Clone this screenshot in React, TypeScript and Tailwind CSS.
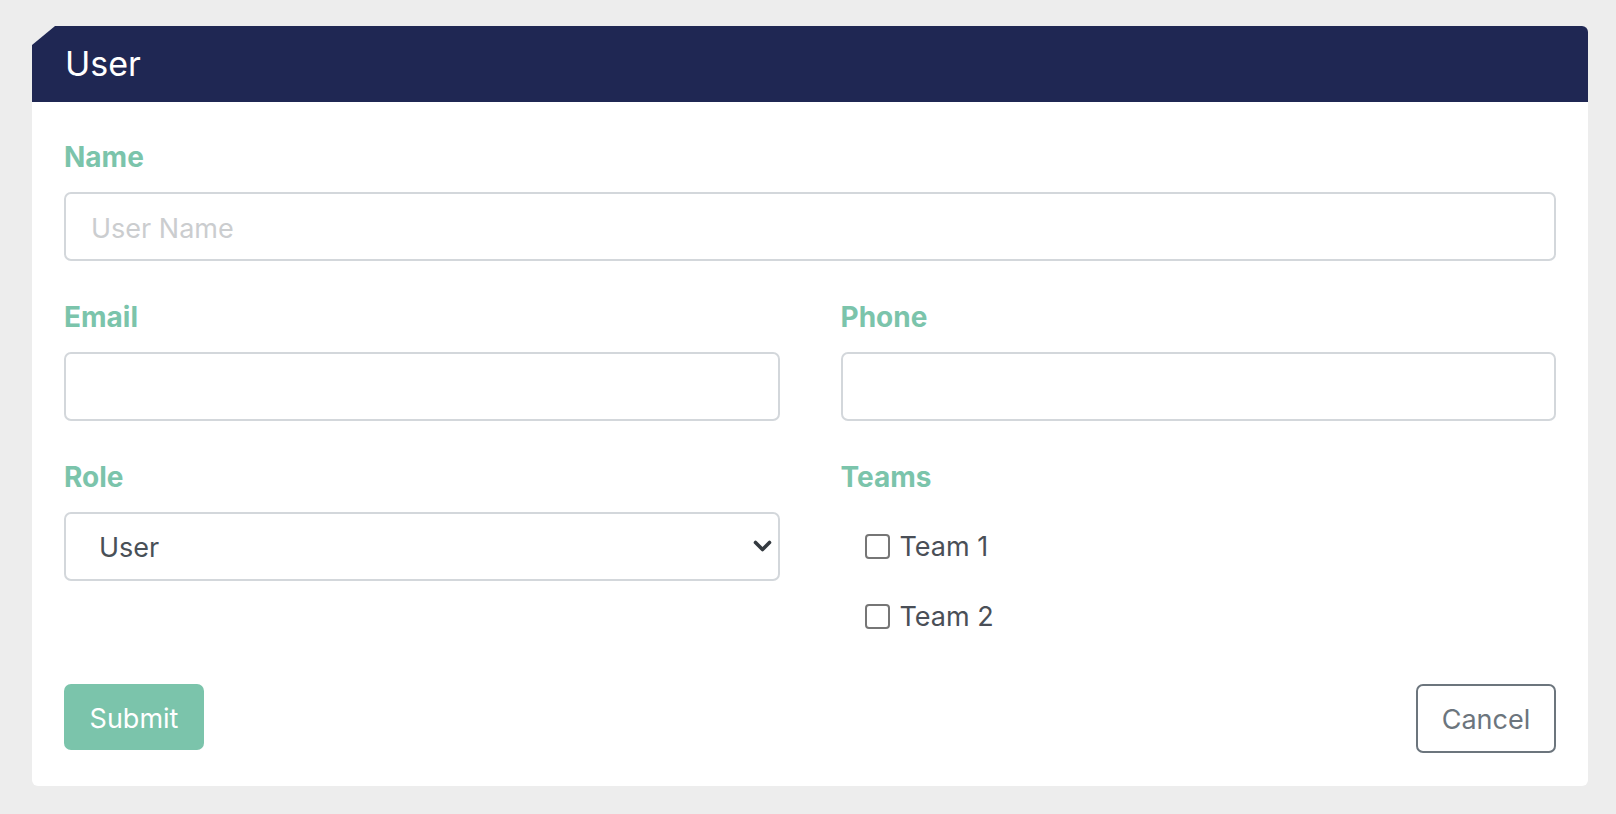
import React from "react";

const font = { fontFamily: "Inter, 'Noto Sans', 'Liberation Sans', sans-serif" };

function Label({ children }: { children: React.ReactNode }) {
  return (
    <label className="block text-[28px] font-bold pt-[3px] leading-[37px] text-[#7bc4ab] mb-4">
      {children}
    </label>
  );
}

function TextInput({ placeholder }: { placeholder?: string }) {
  return (
    <input
      type="text"
      placeholder={placeholder}
      className="block w-full h-[69px] rounded-[7px] border-2 border-[#d3d7db] bg-white px-[25px] pt-[4px] text-[27px] text-[#495057] placeholder:text-[#cbcdcf] outline-none"
    />
  );
}

function Check({ label }: { label: string }) {
  return (
    <label className="flex h-[70px] items-center pl-[24px] pt-[6px]">
      <input
        type="checkbox"
        className="appearance-none w-[25px] h-[25px] rounded-[4px] border-2 border-[#767676] bg-white m-0"
      />
      <span className="ml-[10px] text-[27px] text-[#4a4f57] leading-none">{label}</span>
    </label>
  );
}

export default function App() {
  return (
    <div className="min-h-screen w-full bg-[#ededed] pt-[26px] pl-[32px] pr-[28px] pb-[28px]" style={font}>
      <div className="w-[1556px] bg-white rounded-md [clip-path:polygon(23px_0,100%_0,100%_100%,0_100%,0_19px)]">
        <div className="h-[76px] bg-[#1f2753] rounded-tr-md flex items-center px-[33px]">
          <h1 className="text-[34px] leading-none text-white font-normal">User</h1>
        </div>
        <div className="px-8 pt-[34px] pb-[33px] flex flex-col gap-[35px]">
          <div>
            <Label>Name</Label>
            <TextInput placeholder="User Name" />
          </div>
          <div className="grid grid-cols-2 gap-x-[61px] gap-y-[35px]">
            <div>
              <Label>Email</Label>
              <TextInput />
            </div>
            <div>
              <Label>Phone</Label>
              <TextInput />
            </div>
            <div>
              <Label>Role</Label>
              <div className="relative">
                <select
                  defaultValue="User"
                  className="block w-full h-[69px] appearance-none rounded-[7px] border-2 border-[#d3d7db] bg-white pl-[33px] pr-[40px] pt-[4px] text-[27px] text-[#495057] outline-none"
                >
                  <option>User</option>
                  <option>Admin</option>
                </select>
                <svg
                  className="absolute right-[8px] top-[28px] pointer-events-none"
                  width="19"
                  height="13"
                  viewBox="0 0 19 13"
                >
                  <polyline
                    points="2.5,2.5 9.5,9.5 16.5,2.5"
                    fill="none"
                    stroke="#343a40"
                    strokeWidth="3.6"
                    strokeLinecap="round"
                    strokeLinejoin="round"
                  />
                </svg>
              </div>
            </div>
            <div>
              <label className="block text-[28px] font-bold pt-[3px] leading-[37px] text-[#7bc4ab]">Teams</label>
              <div className="mt-[12px]">
                <Check label="Team 1" />
                <Check label="Team 2" />
              </div>
            </div>
          </div>
          <div className="flex items-start justify-between mt-[1px]">
            <button className="w-[140px] h-[66px] rounded-[7px] bg-[#7bc4ab] text-white text-[27px] pt-[4px]">
              Submit
            </button>
            <button className="w-[140px] h-[69px] rounded-[7px] border-2 border-[#6c757d] bg-white text-[#6c757d] text-[27px] pt-[3px]">
              Cancel
            </button>
          </div>
        </div>
      </div>
    </div>
  );
}
